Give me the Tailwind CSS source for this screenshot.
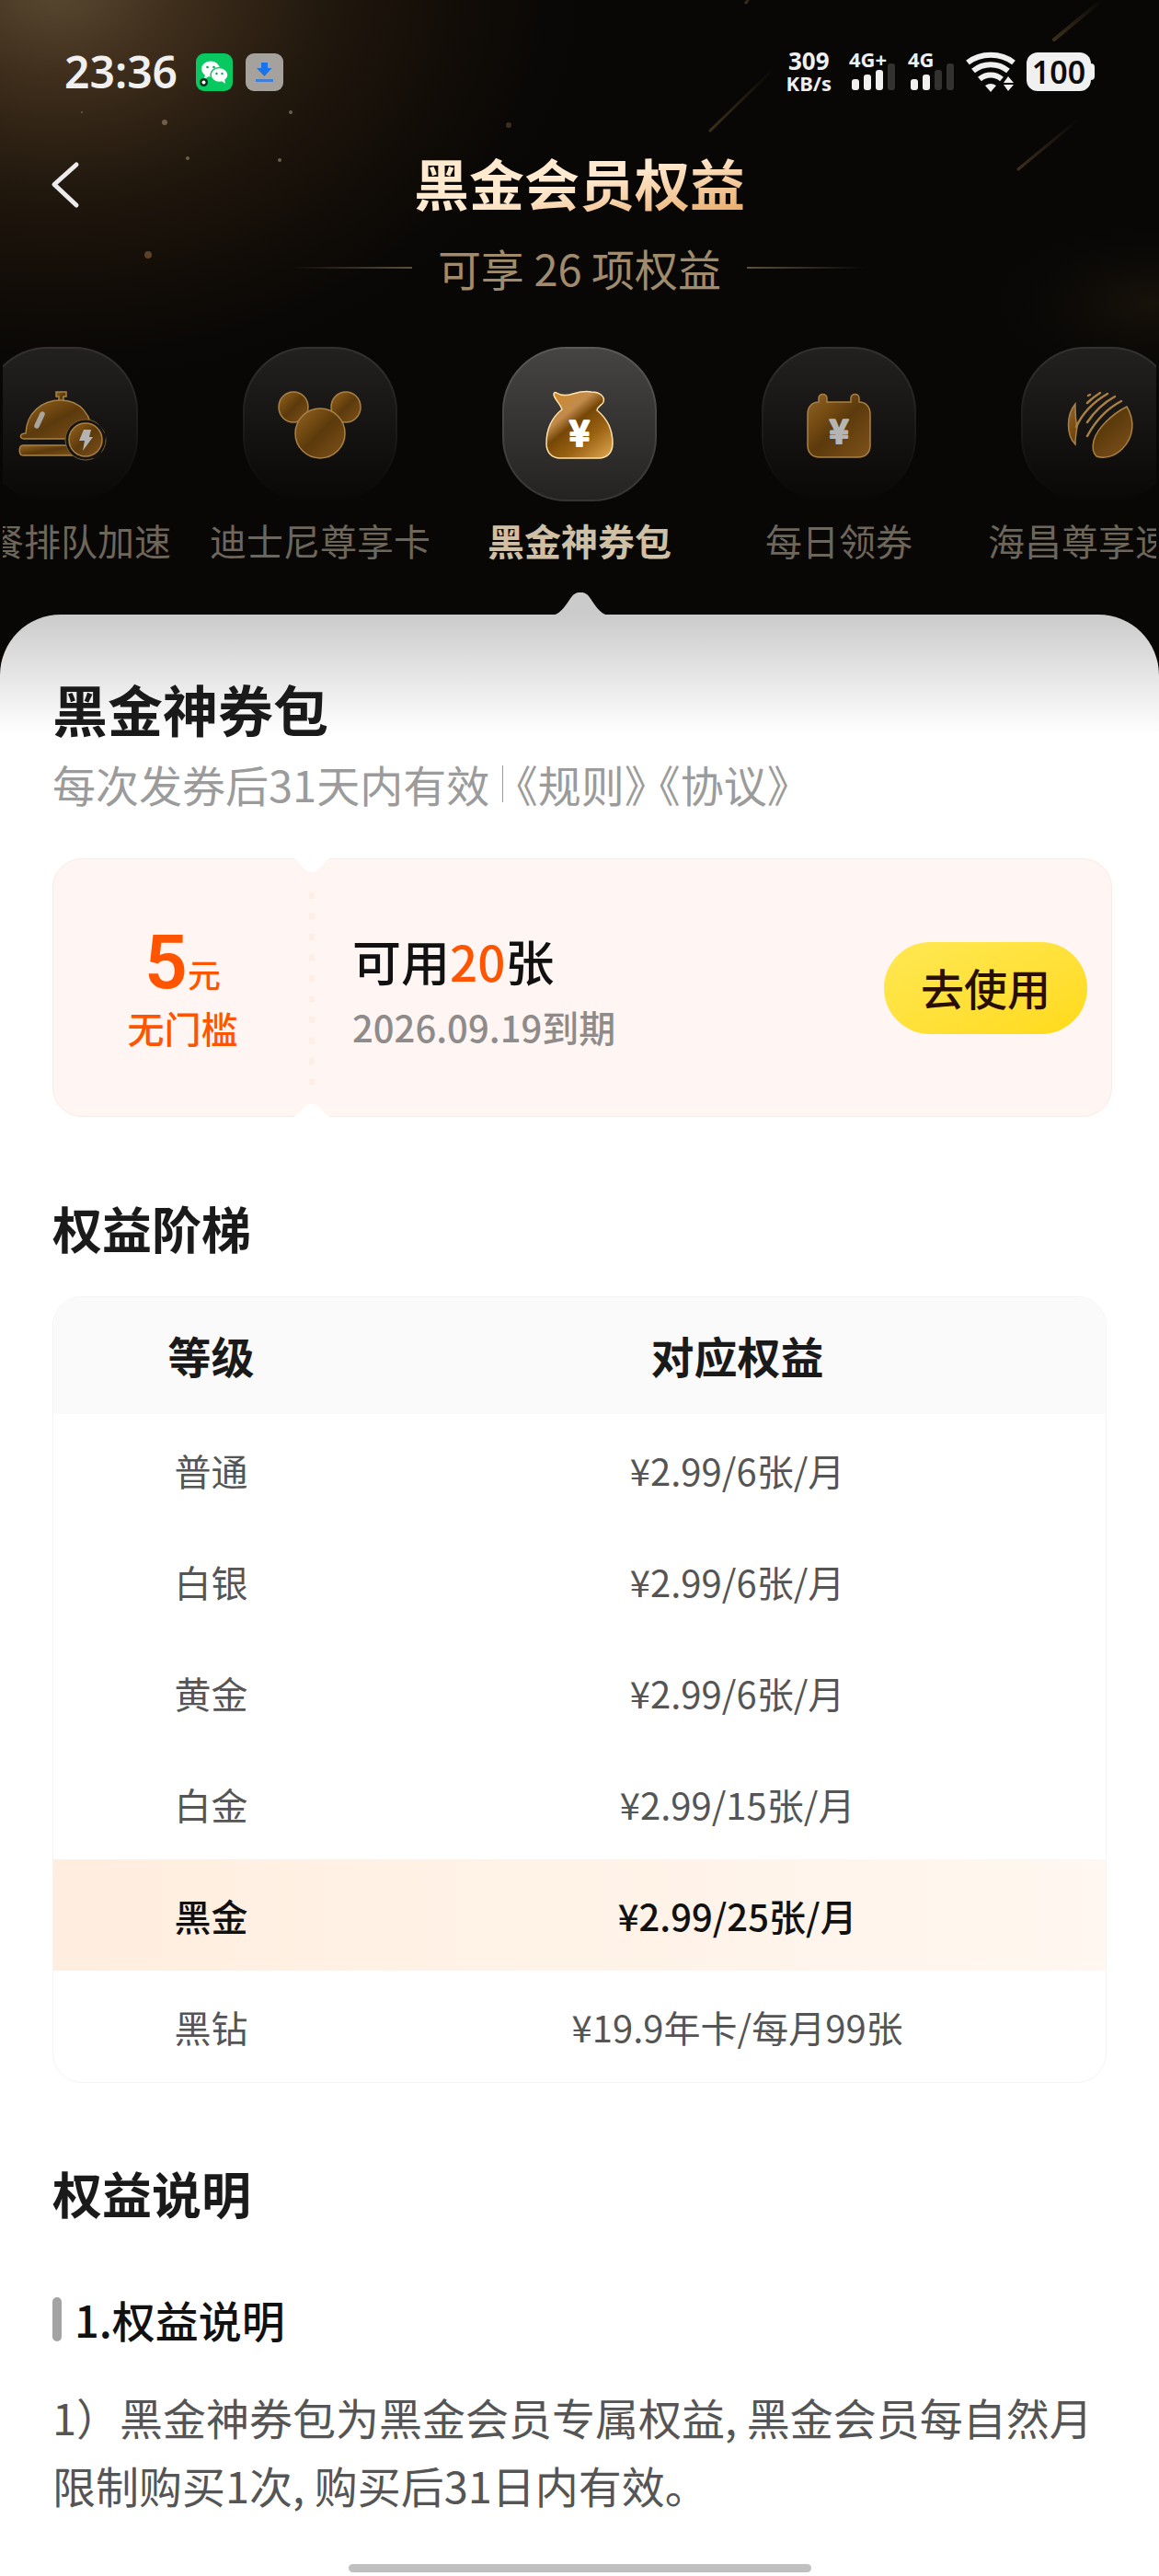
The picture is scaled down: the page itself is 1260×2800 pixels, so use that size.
<!DOCTYPE html>
<html lang="zh-CN">
<head>
  <meta charset="UTF-8" />
  <meta name="viewport" content="width=device-width, initial-scale=1.0" />
  <title>黑金会员权益</title>
  <script src="https://cdn.jsdelivr.net/npm/@tailwindcss/browser@4"></script>
</head>
<body class="bg-white font-['Noto_Sans_CJK_SC','Noto_Sans',sans-serif] text-[#1a1a1a]">
  <div class="relative overflow-hidden bg-[#080706]">
    <!-- Header glow, sparks and light streaks -->
    <svg class="absolute left-0 top-0 w-full h-[740px]" viewBox="0 0 1260 740" preserveAspectRatio="xMidYMin slice" aria-hidden="true">
      <defs>
        <radialGradient id="glow" gradientUnits="userSpaceOnUse" cx="60" cy="-20" r="600" gradientTransform="matrix(1 0 0 .75 0 0)">
          <stop offset="0" stop-color="#5a4931" />
          <stop offset=".22" stop-color="#3f2e1c" />
          <stop offset=".5" stop-color="#20170d" />
          <stop offset=".75" stop-color="#110c07" />
          <stop offset="1" stop-color="#0a0807" stop-opacity="0" />
        </radialGradient>
        <radialGradient id="glow2" gradientUnits="userSpaceOnUse" cx="1250" cy="330" r="200" gradientTransform="matrix(1 0 0 .5 0 165)">
          <stop offset="0" stop-color="#18120a" />
          <stop offset="1" stop-color="#080706" stop-opacity="0" />
        </radialGradient>
        <linearGradient id="streak" x1="0" y1="1" x2="1" y2="0">
          <stop offset="0" stop-color="#8a6a3c" stop-opacity=".4" />
          <stop offset="1" stop-color="#8a6a3c" stop-opacity="0" />
        </linearGradient>
      </defs>
      <rect width="1260" height="740" fill="url(#glow)" />
      <rect width="1260" height="740" fill="url(#glow2)" />
      <g stroke="url(#streak)" stroke-width="3" stroke-linecap="round">
        <path d="M772 142L842 74" />
        <path d="M1146 43L1198 0" stroke-width="4" />
        <path d="M1107 184L1172 130" />
        <path d="M811 3L818 -6" />
      </g>
      <g fill="#6d5f4b">
        <circle cx="179" cy="133" r="3" />
        <circle cx="316" cy="122" r="2" />
        <circle cx="204" cy="172" r="2" />
        <circle cx="304" cy="174" r="2" />
        <circle cx="161" cy="277" r="4" fill="#5a4128" />
        <circle cx="553" cy="136" r="3" fill="#3d2f1c" />
        <circle cx="89" cy="122" r="1" />
      </g>
    </svg>

    <div class="relative">
      <!-- Status bar -->
      <div class="flex h-[156px] items-center justify-between pl-[70px] pr-[74px] text-[#f0f0f0]">
        <div class="flex items-center gap-3.5">
          <span class="mr-1.5 font-['Noto_Sans'] text-[48px] font-semibold leading-[56px]">23:36</span>
          <svg class="h-[41px] w-10" viewBox="0 0 40 41" role="img" aria-label="微信">
            <rect width="40" height="41" rx="9" fill="#07c95f" />
            <ellipse cx="16" cy="17" rx="10" ry="8.500" fill="#fff" />
            <path d="M10 23l-1 5 5-3z" fill="#fff" />
            <ellipse cx="25.500" cy="23.500" rx="9.500" ry="8" fill="#fff" stroke="#07c95f" stroke-width="1.500" />
            <path d="M28 30l4 3-1-5z" fill="#fff" />
            <g fill="#07a94f"><circle cx="12.500" cy="15" r="1.300" /><circle cx="19.500" cy="15" r="1.300" /><circle cx="22.500" cy="22" r="1.200" /><circle cx="28.500" cy="22" r="1.200" /></g>
            <circle cx="8.500" cy="31.500" r="4.500" fill="#06301a" /><circle cx="8.500" cy="31.500" r="2" fill="#fff" />
          </svg>
          <svg class="h-[41px] w-[41px]" viewBox="0 0 41 41" role="img" aria-label="下载">
            <rect width="41" height="41" rx="9" fill="#a5a29e" />
            <path d="M17 10h7v6h4.500L20.500 25 12 16h5z" fill="#1a73e8" />
            <path d="M11 29.500h19" stroke="#3f7fd6" stroke-width="3" />
          </svg>
        </div>
        <div class="flex items-center">
          <div class="flex flex-col items-center font-['Noto_Sans'] font-bold leading-6">
            <span class="text-[26px]">309</span>
            <span class="text-[22px]">KB/s</span>
          </div>
          <svg class="ml-4 h-[46px] w-[56px] overflow-visible" viewBox="0 0 56 46" role="img" aria-label="信号一">
            <text x="3" y="18" font-family="Noto Sans" font-size="22" font-weight="700" fill="#f0f0f0">4G+</text>
            <g fill="#f0f0f0"><rect x="6" y="31" width="8" height="12" rx="3" /><rect x="19" y="26" width="8" height="17" rx="3" /><rect x="32" y="21" width="8" height="22" rx="3" /></g>
            <rect x="45" y="14" width="8" height="29" rx="3" fill="#333230" />
          </svg>
          <svg class="ml-2 h-[46px] w-[56px] overflow-visible" viewBox="0 0 56 46" role="img" aria-label="信号二">
            <text x="3" y="18" font-family="Noto Sans" font-size="22" font-weight="700" fill="#f0f0f0">4G</text>
            <g fill="#f0f0f0"><rect x="6" y="31" width="8" height="12" rx="3" /><rect x="19" y="26" width="8" height="17" rx="3" /></g>
            <g fill="#333230"><rect x="32" y="21" width="8" height="22" rx="3" /><rect x="45" y="14" width="8" height="29" rx="3" /></g>
          </svg>
          <svg class="ml-2.5 h-[44px] w-[54px]" viewBox="0 0 54 44" fill="none" stroke="#f0f0f0" stroke-width="6" role="img" aria-label="无线网络">
            <path d="M2 12C16 1 38 1 52 12" />
            <path d="M8 21C19 12 35 12 46 21" />
            <path d="M15 30C22 24 32 24 39 30" />
            <path d="M21 37q6-4 12 0l-6 7z" fill="#f0f0f0" stroke="none" />
            <path d="M41 34l5-7 6 7zM41 36h11l-6 7z" fill="#f0f0f0" stroke="none" />
          </svg>
          <div class="relative ml-3 flex h-[42px] w-[70px] items-center justify-center rounded-xl bg-[#f0f0f0] font-['Noto_Sans'] text-[34px] font-semibold leading-none text-[#0c0b0a]">
            100
            <span class="absolute -right-1 top-3 h-[18px] w-2 rounded-sm bg-[#f0f0f0]"></span>
          </div>
        </div>
      </div>

      <header class="relative flex h-[84px] items-center justify-center">
        <button type="button" aria-label="返回" class="absolute left-[50px] top-[18px] h-[56px] w-[44px]">
          <svg class="h-full w-full" viewBox="0 0 44 56" fill="none" stroke="#ececec" stroke-width="5" stroke-linecap="round" stroke-linejoin="round"><path d="M33 5L9 26.500 33 49" /></svg>
        </button>
        <h1 class="bg-linear-to-br from-[#ffe9cf] from-50% to-[#e5a55c] bg-clip-text text-[60px] font-bold leading-[80px] text-transparent">黑金会员权益</h1>
      </header>

      <div class="flex h-[102px] items-center justify-center gap-7">
        <span class="h-0.5 w-[130px] bg-linear-to-r from-transparent to-[#5c503f]"></span>
        <p class="text-[47px] leading-[72px] text-[#a08c6c]">可享 26 项权益</p>
        <span class="h-0.5 w-[130px] bg-linear-to-l from-transparent to-[#5c503f]"></span>
      </div>

      <!-- Benefit tabs -->
      <svg class="absolute h-0 w-0" aria-hidden="true">
        <defs>
          <linearGradient id="tabOn" x1="0" y1="0" x2="0" y2="1"><stop offset="0" stop-color="#454443" /><stop offset="1" stop-color="#242322" /></linearGradient>
          <linearGradient id="tabDim" x1="0" y1="0" x2="0" y2="1"><stop offset="0" stop-color="#222120" /><stop offset="1" stop-color="#090807" /></linearGradient>
          <linearGradient id="gold" x1=".1" y1="0" x2=".9" y2="1">
            <stop offset="0" stop-color="#cf8a2a" />
            <stop offset=".3" stop-color="#c28b4c" />
            <stop offset=".45" stop-color="#754706" />
            <stop offset=".7" stop-color="#9c6414" />
            <stop offset="1" stop-color="#d8a04a" />
          </linearGradient>
          <linearGradient id="goldDim" x1="0" y1="0" x2="1" y2="1">
            <stop offset="0" stop-color="#8f6433" />
            <stop offset=".25" stop-color="#7a4f14" />
            <stop offset=".5" stop-color="#5c3a0c" />
            <stop offset="1" stop-color="#7e521b" />
          </linearGradient>
        </defs>
      </svg>
      <nav class="mx-[3px] flex justify-center overflow-hidden pb-[51px] pt-[35px] text-[40px] text-[#6d665b]">
        <button type="button" class="flex w-[282px] shrink-0 flex-col items-center">
          <span class="block rounded-[70px] bg-linear-to-b from-[#333230] to-transparent p-0.5">
            <svg class="h-[164px] w-[164px]" viewBox="2 2 164 164">
              <rect x="2" y="2" width="164" height="164" rx="68" fill="url(#tabDim)" />
              <g fill="url(#goldDim)" stroke="#a98144" stroke-width="1.500">
                <path d="M79 49h11v5h-3v6h-5v-6h-3z" />
                <path d="M46 94c1-22 17-36 38-36s34 15 36 42H44c-5 0-5-6 2-6z" />
                <path d="M43 107h58v11H43c-5 0-5-11 0-11z" />
              </g>
              <circle cx="111" cy="101" r="22" fill="#151413" stroke="#7b5c2e" stroke-width="1" />
              <path d="M101 119h22l12-36-18-8 4 4 13 16-8 27z" fill="#151413" />
              <circle cx="111" cy="101" r="18" fill="url(#goldDim)" stroke="#a98144" stroke-width="1.500" />
              <path d="M64 73l-6 13" stroke="#a9a59d" stroke-width="5.500" stroke-linecap="round" />
              <path d="M109 90h8l-2 8h4l-11 15 2-11h-6z" fill="#b3b3b3" />
            </svg>
          </span>
          <span class="mt-3 whitespace-nowrap leading-[60px]">用餐排队加速</span>
        </button>
        <button type="button" class="flex w-[282px] shrink-0 flex-col items-center">
          <span class="block rounded-[70px] bg-linear-to-b from-[#333230] to-transparent p-0.5">
            <svg class="h-[164px] w-[164px]" viewBox="2 2 164 164">
              <rect x="2" y="2" width="164" height="164" rx="68" fill="url(#tabDim)" />
              <g fill="url(#goldDim)" stroke="#a98144" stroke-width="1.500">
                <ellipse cx="55" cy="65.500" rx="16" ry="16.500" />
                <ellipse cx="112" cy="65.500" rx="16" ry="16.500" />
                <circle cx="84" cy="94" r="27" />
              </g>
            </svg>
          </span>
          <span class="mt-3 whitespace-nowrap leading-[60px]">迪士尼尊享卡</span>
        </button>
        <button type="button" aria-current="true" class="flex w-[282px] shrink-0 flex-col items-center">
          <span class="block rounded-[70px] bg-linear-to-b from-[#5a5958] to-[#353433] p-0.5">
            <svg class="h-[164px] w-[164px]" viewBox="2 2 164 164">
              <rect x="2" y="2" width="164" height="164" rx="68" fill="url(#tabOn)" />
              <path d="M59 50c6 4 12 3 18 1 7-2 14-3 20-2 9 0 15 5 13 11-2 4-6 4-7 9 10 8 17 20 17 36 0 10-6 16-15 16H63c-9 0-15-6-15-16 0-16 7-29 17-37-2-6-8-11-9-16 0-2 1-3 3-2z" fill="url(#gold)" stroke="#ffe3ab" stroke-width="1.500" />
              <text x="84" y="108" text-anchor="middle" font-family="Noto Sans CJK SC" font-size="38" font-weight="700" fill="#fff" stroke="#fff" stroke-width="2" stroke-linejoin="round">¥</text>
            </svg>
          </span>
          <span class="mt-3 whitespace-nowrap font-bold leading-[60px] text-[#cfc0a5]">黑金神券包</span>
        </button>
        <button type="button" class="flex w-[282px] shrink-0 flex-col items-center">
          <span class="block rounded-[70px] bg-linear-to-b from-[#333230] to-transparent p-0.5">
            <svg class="h-[164px] w-[164px]" viewBox="2 2 164 164">
              <rect x="2" y="2" width="164" height="164" rx="68" fill="url(#tabDim)" />
              <path d="M62 60v-4c0-6 9-6 9 0v4h26v-4c0-6 9-6 9 0v4c7 0 12 5 12 13v34c0 8-5 13-13 13H63c-8 0-13-5-13-13V73c0-8 5-13 12-13z" fill="url(#goldDim)" stroke="#a98144" stroke-width="1.500" />
              <text x="84" y="105" text-anchor="middle" font-family="Noto Sans CJK SC" font-size="36" font-weight="700" fill="#b5b5b5" stroke="#b5b5b5" stroke-width="2" stroke-linejoin="round">¥</text>
            </svg>
          </span>
          <span class="mt-3 whitespace-nowrap leading-[60px]">每日领券</span>
        </button>
        <button type="button" class="flex w-[282px] shrink-0 flex-col items-center">
          <span class="block rounded-[70px] bg-linear-to-b from-[#333230] to-transparent p-0.5">
            <svg class="h-[164px] w-[164px]" viewBox="2 2 164 164">
              <rect x="2" y="2" width="164" height="164" rx="68" fill="url(#tabDim)" />
              <path d="M59 62c-10 12-10 34 0 44 0-7 1-13 2-19-2-7-2-16-2-25zM115 65c9 15 8 33-5 46-8 8-19 11-28 8-4-4-5-9-3-17 4-14 20-29 36-37z" fill="url(#goldDim)" stroke="#a98144" stroke-width="1.500" />
              <g fill="none" stroke="#a98144" stroke-width="2.500" stroke-linecap="round">
                <path d="M72 61q6-6 14-11" /><path d="M60 87q10-22 34-36" /><path d="M72 82q12-18 30-28" /><path d="M72 97q14-26 37-38" /><path d="M73 53l2-1" />
              </g>
            </svg>
          </span>
          <span class="mt-3 whitespace-nowrap leading-[60px]">海昌尊享速通</span>
        </button>
      </nav>

      <!-- Content sheet -->
      <main class="relative rounded-t-[66px] bg-white bg-linear-to-b from-[#cbcbcb] to-white to-[130px] px-[57px] pt-16">
        <svg class="absolute -top-6 left-1/2 -ml-[29px] h-[25px] w-[60px]" viewBox="0 0 60 25" fill="#cbcbcb" aria-hidden="true"><path d="M0 25C12 22 17 7 23 2c4-3 10-3 14 0 6 5 11 20 23 23z" /></svg>

        <h2 class="text-[60px] font-bold leading-[76px]">黑金神券包</h2>
        <div class="mt-2 flex items-center gap-3.5 text-[47px] leading-[72px] text-[#9b9b9b]">
          <span>每次发券后31天内有效</span>
          <span class="h-10 w-px bg-[#9b9b9b]"></span>
          <a href="#rules" class="[font-feature-settings:'halt']">《规则》</a>
          <a href="#agreement" class="[font-feature-settings:'halt']">《协议》</a>
        </div>

        <!-- Coupon -->
        <section class="relative -mr-1.5 mt-[45px] flex h-[281px] items-center rounded-[32px] border border-[#fbe9e5] bg-[#fff6f4]">
          <div class="flex w-[281px] flex-col items-center pt-4 text-[#ff5500]">
            <p class="flex items-baseline leading-[58px]"><span class="font-[Roboto] text-[82px] font-semibold">5</span><span class="text-[36px] font-medium">元</span></p>
            <p class="text-[40px] font-medium leading-[60px]">无门槛</p>
          </div>
          <svg class="absolute left-[259px] -top-px h-[281px] w-11" viewBox="0 0 44 281" aria-hidden="true">
            <path d="M0-1C10 2 12 15 22 15S34 2 44-1z" fill="#fff" />
            <path d="M0 282C10 279 12 267 22 267S34 279 44 282z" fill="#fff" />
            <path d="M22 37v215" stroke="#ffeee5" stroke-width="6" stroke-dasharray="7 15.500" />
          </svg>
          <div class="ml-11 flex-1 pt-1">
            <p class="text-[53px] font-medium leading-[76px] text-[#111]">可用<span class="text-[#ff5500]">20</span>张</p>
            <p class="mt-1 text-[40px] font-medium leading-[60px] text-[#8f8b8a]">2026.09.19到期</p>
          </div>
          <button type="button" class="mr-[26px] h-[100px] w-[221px] rounded-full bg-linear-to-br from-[#ffe851] to-[#ffda14] text-[47px] font-medium text-[#2a0f00]">去使用</button>
        </section>

        <h2 class="mt-[81px] text-[54px] font-bold leading-[80px]">权益阶梯</h2>
        <div class="mt-[34px] overflow-hidden rounded-[32px] border border-[#f4f4f4]">
          <table class="w-full table-fixed text-center text-[40px] text-[#555]">
            <thead>
              <tr class="h-[127px] bg-[#fafafa] text-[47px] text-[#1a1a1a]">
                <th class="w-[30%] font-bold">等级</th>
                <th class="font-bold">对应权益</th>
              </tr>
            </thead>
            <tbody>
              <tr class="h-[121px]"><td>普通</td><td>¥2.99/6张/月</td></tr>
              <tr class="h-[121px]"><td>白银</td><td>¥2.99/6张/月</td></tr>
              <tr class="h-[121px]"><td>黄金</td><td>¥2.99/6张/月</td></tr>
              <tr class="h-[121px]"><td>白金</td><td>¥2.99/15张/月</td></tr>
              <tr class="h-[121px] bg-linear-to-r from-[#ffeedf] to-[#fff7f0] font-medium text-[#111]"><td>黑金</td><td>¥2.99/25张/月</td></tr>
              <tr class="h-[121px]"><td>黑钻</td><td>¥19.9年卡/每月99张</td></tr>
            </tbody>
          </table>
        </div>

        <h2 class="mt-20 text-[54px] font-bold leading-[80px]" id="rules">权益说明</h2>
        <h3 class="mt-15 flex items-center gap-3.5 text-[47px] font-medium leading-[74px] text-[#111]"><span class="h-12 w-2.5 rounded-full bg-[#a3a3a3]"></span>1.权益说明</h3>
        <p class="mt-8 text-[47px] leading-[74px] text-[#555]">1）黑金神券包为黑金会员专属权益, 黑金会员每自然月限制购买1次, 购买后31日内有效。</p>

        <div class="mx-auto mt-[49px] h-[13px] w-[503px]"><div class="h-[9px] rounded-full bg-[#c0c0c0]"></div></div>
      </main>
    </div>
  </div>
</body>
</html>
